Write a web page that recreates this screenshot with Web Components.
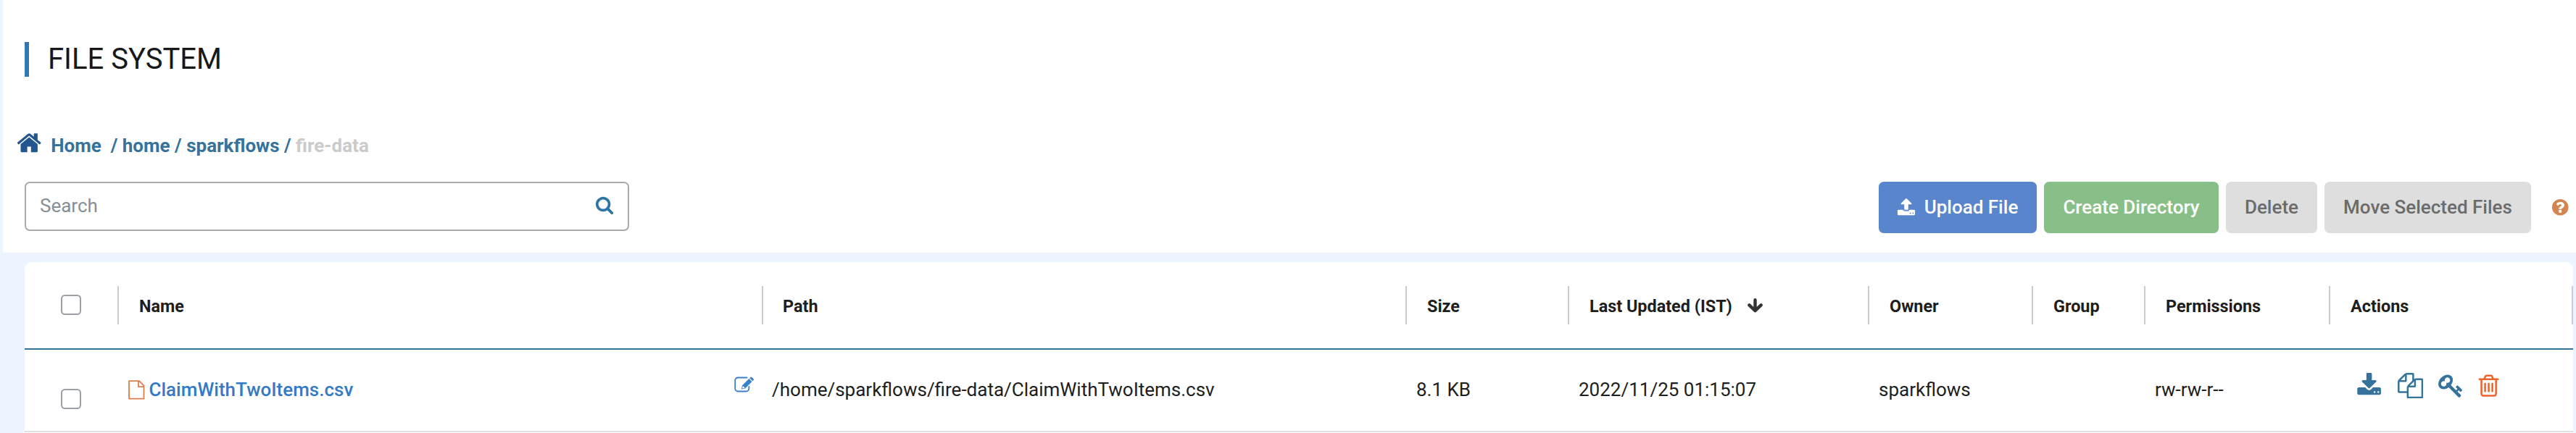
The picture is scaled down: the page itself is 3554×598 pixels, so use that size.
<!DOCTYPE html>
<html lang="en">
<head>
<meta charset="utf-8">
<title>File System</title>
<style>
html,body{margin:0;height:598px;overflow:hidden}
body{background:#ecf5ff;font-family:Roboto,"Liberation Sans",sans-serif;color:#1d1e20}
</style>
</head>
<body>
<fs-page></fs-page>
<script>
const define = (name, html, init) => customElements.define(name, class extends HTMLElement {
  connectedCallback() {
    if (this.shadowRoot) return;
    const root = this.attachShadow({ mode: 'open' });
    root.innerHTML = html;
    if (init) init(this, root);
  }
});

const ICONS = {
  home: '<path d="M1472 992v480q0 26-19 45t-45 19h-384v-384h-256v384h-384q-26 0-45-19t-19-45v-480q0-1 .5-3t.5-3l575-474 575 474q1 2 1 6zm223-69l-62 74q-8 9-21 11h-3q-13 0-21-7l-692-577-692 577q-12 8-24 7-13-2-21-11l-62-74q-8-10-7-23.5t11-21.5l719-599q32-26 76-26t76 26l244 204v-195q0-14 9-23t23-9h192q14 0 23 9t9 23v408l219 182q10 8 11 21.5t-7 23.5z"/>',
  search: '<path d="M1216 832q0-185-131.5-316.5t-316.5-131.5-316.5 131.5-131.5 316.5 131.5 316.5 316.5 131.5 316.5-131.5 131.5-316.5zm512 832q0 52-38 90t-90 38q-54 0-90-38l-343-342q-179 124-399 124-143 0-273.5-55.5t-225-150-150-225-55.5-273.5 55.5-273.5 150-225 225-150 273.5-55.5 273.5 55.5 225 150 150 225 55.5 273.5q0 220-124 399l343 343q37 37 37 90z"/>',
  help: '<path d="M1024 1376v-192q0-14-9-23t-23-9h-192q-14 0-23 9t-9 23v192q0 14 9 23t23 9h192q14 0 23-9t9-23zm256-672q0-88-55.5-163t-138.5-116-170-41q-243 0-371 213-15 24 8 42l132 100q7 6 19 6 16 0 25-12 53-68 86-92 34-24 86-24 48 0 85.5 26t37.5 59q0 38-20 61t-68 45q-63 28-115.5 86.5t-52.5 125.5v36q0 14 9 23t23 9h192q14 0 23-9t9-23q0-19 21.5-49.5t54.5-49.5q32-18 49-28.5t46-35 44.5-48 28-60.5 12.5-81zm384 192q0 209-103 385.5t-279.5 279.5-385.5 103-385.5-103-279.5-279.5-103-385.5 103-385.5 279.5-279.5 385.5-103 385.5 103 279.5 279.5 103 385.5z"/>',
  upload: '<path d="M1344 1472q0-26-19-45t-45-19-45 19-19 45 19 45 45 19 45-19 19-45zm256 0q0-26-19-45t-45-19-45 19-19 45 19 45 45 19 45-19 19-45zm128-224v320q0 40-28 68t-68 28h-1472q-40 0-68-28t-28-68v-320q0-40 28-68t68-28h427q21 56 70.5 92t110.5 36h256q61 0 110.5-36t70.5-92h427q40 0 68 28t28 68zm-325-648q-17 40-59 40h-256v448q0 26-19 45t-45 19h-256q-26 0-45-19t-19-45v-448h-256q-42 0-59-40-17-39 14-69l448-448q18-19 45-19t45 19l448 448q31 30 14 69z"/>',
  download: '<path d="M1344 1344q0-26-19-45t-45-19-45 19-19 45 19 45 45 19 45-19 19-45zm256 0q0-26-19-45t-45-19-45 19-19 45 19 45 45 19 45-19 19-45zm128-224v320q0 40-28 68t-68 28h-1472q-40 0-68-28t-28-68v-320q0-40 28-68t68-28h465l135 136q58 56 136 56t136-56l136-136h464q40 0 68 28t28 68zm-325-569q17 41-14 70l-448 448q-18 19-45 19t-45-19l-448-448q-31-29-14-70 17-39 59-39h256v-448q0-26 19-45t45-19h256q26 0 45 19t19 45v448h256q42 0 59 39z"/>',
  copy: '<path d="M1696 384q40 0 68 28t28 68v1216q0 40-28 68t-68 28h-960q-40 0-68-28t-28-68v-288h-544q-40 0-68-28t-28-68v-672q0-40 20-88t48-76l408-408q28-28 76-48t88-20h416q40 0 68 28t28 68v328q68-40 128-40h416zm-544 213l-299 299h299v-299zm-640-384l-299 299h299v-299zm196 647l316-316v-416h-384v416q0 40-28 68t-68 28h-416v640h512v-256q0-40 20-88t48-76zm956 804v-1152h-384v416q0 40-28 68t-68 28h-416v640h896z"/>',
  key: '<path d="M832 512q0-80-56-136t-136-56-136 56-56 136q0 42 19 83-41-19-83-19-80 0-136 56t-56 136 56 136 136 56 136-56 56-136q0-42-19-83 41 19 83 19 80 0 136-56t56-136zm851 704q0 17-49 66t-66 49q-9 0-28.5-16t-36.5-33-38.5-40-24.5-26l-96 96 220 220q28 28 28 68 0 42-39 81t-81 39q-40 0-68-28l-671-671q-176 131-365 131-163 0-265.5-102.5t-102.5-265.5q0-160 95-313t248-248 313-95q163 0 265.5 102.5t102.5 265.5q0 189-131 365l355 355 96-96q-3-3-26-24.5t-40-38.5-33-36.5-16-28.5q0-17 49-66t66-49q13 0 23 10 6 6 46 44.5t82 79.5 86.5 86 73 78 28.5 41z"/>',
  trash: '<path d="M704 736v576q0 14-9 23t-23 9h-64q-14 0-23-9t-9-23v-576q0-14 9-23t23-9h64q14 0 23 9t9 23zm256 0v576q0 14-9 23t-23 9h-64q-14 0-23-9t-9-23v-576q0-14 9-23t23-9h64q14 0 23 9t9 23zm256 0v576q0 14-9 23t-23 9h-64q-14 0-23-9t-9-23v-576q0-14 9-23t23-9h64q14 0 23 9t9 23zm128 724v-948h-896v948q0 22 7 40.5t14.5 27 10.5 8.5h832q3 0 10.5-8.5t14.5-27 7-40.5zm-672-1076h448l-48-117q-7-9-17-11h-317q-10 2-17 11zm928 32v64q0 14-9 23t-23 9h-96v948q0 83-47 143.5t-113 60.5h-832q-66 0-113-58.5t-47-141.5v-952h-96q-14 0-23-9t-9-23v-64q0-14 9-23t23-9h309l70-167q15-37 54-63t79-26h320q40 0 79 26t54 63l70 167h309q14 0 23 9t9 23z"/>'
};

define('fs-icon', `<style>:host{display:block;flex:none}svg{display:block;fill:currentColor}</style>`, (el, root) => {
  const s = el.getAttribute('size');
  root.innerHTML += `<svg width="${s}" height="${s}" viewBox="0 0 1792 1792">${ICONS[el.getAttribute('name')]}</svg>`;
});

define('fs-title', `<style>
:host{display:flex;align-items:center;height:48px;font-size:40px;line-height:48px;color:#17181a}
i{width:6px;height:48px;background:#3576b5;margin-right:26px}
</style><i></i><slot></slot>`);

define('fs-crumbs', `<style>
:host{display:flex;height:40px;font-size:26px;font-weight:700;line-height:40px;color:#35739c}
fs-icon{color:#23568f;margin:-2.2px 11.4px 0 0}
span{white-space:pre}
.here{color:#cbcbcb}
</style><fs-icon name="home" size="36.4"></fs-icon><span>Home  / home / sparkflows / </span><span class="here">fire-data</span>`);

define('fs-search', `<style>
:host{display:flex;box-sizing:border-box;width:834px;height:68px;border:2px solid #aaa;border-radius:7px;padding:0 19.5px 0 19px;justify-content:space-between;font-size:26px;line-height:62px;color:#868e96}
fs-icon{color:#2f75a5;margin-top:16.8px}
</style><slot></slot><fs-icon name="search" size="26"></fs-icon>`);

define('fs-button', `<style>
:host{display:flex;box-sizing:border-box;height:71px;border-radius:7px;justify-content:center;font-size:26px;font-weight:500;line-height:71px;color:#fff;background:#dedede;white-space:pre}
:host([kind=primary]){background:#5985cc}
:host([kind=success]){background:#88bf88}
:host([disabled]){color:#6b6b6b}
::slotted(fs-icon){margin:21.6px 12px 0 -1px}
</style><slot></slot>`);

define('fs-checkbox', `<style>:host{display:block;box-sizing:border-box;width:28px;height:28px;border:2px solid #9aa0a6;border-radius:5.5px;background:#fff}</style>`);

define('fs-head-cell', `<style>
:host{display:flex;box-sizing:border-box;height:53px;border-left:2px solid #ccc;padding-left:28px;font-size:23.4px;font-weight:700;line-height:56px;color:#1d1e20}
:host([last]){border-right:2px solid #ccc}
</style><slot></slot>`);

define('fs-table', `<style>
:host{display:block;margin:13px 4px 0 34px;height:236px;background:#fff;border-radius:10px 10px 0 0}
.row{display:grid;grid-template-columns:128px 889px 888px 224px 414px 226px 155px 255px 337px;box-sizing:border-box}
.head{height:121px;border-bottom:2px solid #35739c;padding-top:33px}
.body{height:114px;border-bottom:2px solid #dee2e6;font-size:26px;line-height:40px;color:#1d1e20}
.head fs-checkbox{margin:12px 0 0 50px}
.body fs-checkbox{margin:54px 0 0 50px}
.arrow{margin:17.3px 0 0 21px}
.cell{padding:35px 0 0 15px}
.path{padding-left:14px}
.name a{color:#347ac4;font-weight:500;margin-left:5.5px}
.name{display:flex}
.file{margin-top:6.5px}
.edit{margin:1.5px 10px 0 auto}
.acts{display:flex;padding:32px 0 0 37.7px;color:#35739c}
</style>
<div class="row head"><fs-checkbox></fs-checkbox><fs-head-cell>Name</fs-head-cell><fs-head-cell style="padding-left:27px">Path</fs-head-cell><fs-head-cell>Size</fs-head-cell><fs-head-cell>Last Updated (IST)<svg class="arrow" width="21" height="20" viewBox="0 0 21 20" fill="none" stroke="#333" stroke-width="4.4" stroke-linecap="round" stroke-linejoin="round"><path d="M10.5 2.2v14.5M2.4 9.4l8.1 7.8 8.1-7.8"/></svg></fs-head-cell><fs-head-cell>Owner</fs-head-cell><fs-head-cell>Group</fs-head-cell><fs-head-cell>Permissions</fs-head-cell><fs-head-cell last>Actions</fs-head-cell></div>
<div class="row body"><fs-checkbox></fs-checkbox>
<div class="cell name"><svg class="file" width="23" height="27" viewBox="0 0 23 27" fill="none" stroke="#d9804c" stroke-width="1.8" stroke-linejoin="round"><path d="M1 1.2h14l6.5 6.4v18H1zM14 1.2v7.9h7.5"/></svg><a>ClaimWithTwoItems.csv</a>
<svg class="edit" width="28" height="22" viewBox="0 0 28 22"><path d="M17.5 1.5H5a3.8 3.8 0 0 0-3.8 3.8v11.4A3.8 3.8 0 0 0 5 20.5h11.5a3.8 3.8 0 0 0 3.8-3.8V14" fill="none" stroke="#3a80c8" stroke-width="1.8" stroke-linecap="round"/><path d="M10 17.4l.9-5 9.4-9.4 4.2 4-9.4 9.4zM21.2 2.2l1.3-1.2a1.3 1.3 0 0 1 1.8 0l2.3 2.2a1.3 1.3 0 0 1 0 1.8l-1.2 1.2z" fill="#3a80c8"/><path d="M12 13l2.800 2.800-2.900.6-.8-.8z" fill="#fff"/></svg></div>
<div class="cell path">/home/sparkflows/fire-data/ClaimWithTwoItems.csv</div>
<div class="cell">8.1 KB</div><div class="cell">2022/11/25 01:15:07</div><div class="cell">sparkflows</div><div class="cell"></div><div class="cell">rw-rw-r--</div>
<div class="acts"><fs-icon name="download" size="35.2"></fs-icon><fs-icon name="copy" size="35.2" style="margin-left:22.1px"></fs-icon><fs-icon name="key" size="35.2" style="margin-left:20.8px"></fs-icon><fs-icon name="trash" size="35.2" style="margin-left:17.3px;color:#ee622b"></fs-icon></div></div>`);

define('fs-page', `<style>
:host{display:block}
.panel{box-sizing:border-box;height:349px;margin-left:4px;padding-top:58px;background:#fff}
fs-title{margin-left:30px}
fs-crumbs{margin:75px 0 0 18.4px}
.bar{display:flex;margin:30px 8.5px 0 30px}
.buttons{display:flex;gap:10px;margin-left:auto}
.help{color:#d28550;margin:21.8px 0 0 27px}
</style>
<div class="panel"><fs-title>FILE SYSTEM</fs-title><fs-crumbs></fs-crumbs>
<div class="bar"><fs-search>Search</fs-search><div class="buttons">
<fs-button kind="primary" style="width:218px"><fs-icon name="upload" size="26"></fs-icon>Upload File</fs-button>
<fs-button kind="success" style="width:241px">Create Directory</fs-button>
<fs-button disabled style="width:126px">Delete</fs-button>
<fs-button disabled style="width:285px">Move Selected Files</fs-button></div>
<fs-icon class="help" name="help" size="26.5"></fs-icon></div></div>
<fs-table></fs-table>`);
</script>
</body>
</html>
